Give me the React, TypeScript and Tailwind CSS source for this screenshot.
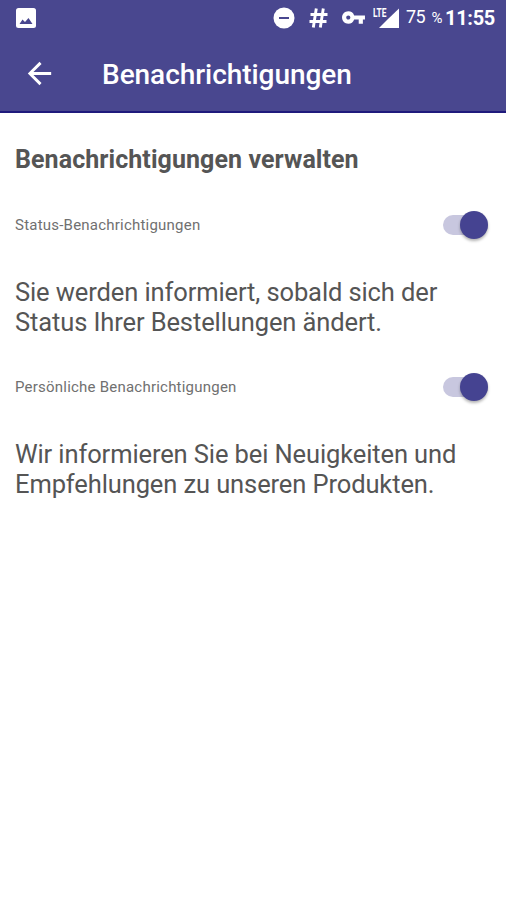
import { useState } from 'react';
import { MdArrowBack, MdVpnKey } from 'react-icons/md';
import clsx from 'clsx';

const SETTINGS = [
  {
    id: 'status',
    label: 'Status-Benachrichtigungen',
    lines: ['Sie werden informiert, sobald sich der', 'Status Ihrer Bestellungen ändert.'],
  },
  {
    id: 'personal',
    label: 'Persönliche Benachrichtigungen',
    lines: ['Wir informieren Sie bei Neuigkeiten und', 'Empfehlungen zu unseren Produkten.'],
  },
];

export default function App() {
  return (
    <div className="flex h-[900px] w-[506px] flex-col overflow-hidden bg-white font-['Roboto',sans-serif]">
      <header className="h-[113px] border-b-2 border-[#1f1a7c] bg-[#49478f] text-white">
        <StatusBar />
        <div className="flex h-[76px] items-center pl-[22px]">
          <button aria-label="Zurück">
            <MdArrowBack size={35} />
          </button>
          <h1 className="mt-1 ml-[45px] text-[28px] leading-8 font-medium tracking-[-0.05px] whitespace-nowrap">
            Benachrichtigungen
          </h1>
        </div>
      </header>

      <main className="px-[15px] pt-[31px] text-[#555]">
        <h2 className="text-[25px] leading-8 font-bold tracking-[0.07px] whitespace-nowrap">
          Benachrichtigungen verwalten
        </h2>
        <div className="mt-7 flex flex-col gap-[29px]">
          {SETTINGS.map((s) => (
            <section key={s.id}>
              <div className="flex h-[42px] items-center justify-between">
                <span className="mt-px text-[15px] tracking-[0.22px] text-[#707070]">{s.label}</span>
                <Toggle label={s.label} />
              </div>
              <p className="mt-[31px] text-[25.5px] leading-[30px] tracking-[-0.11px] whitespace-nowrap">
                {s.lines[0]}
                <br />
                {s.lines[1]}
              </p>
            </section>
          ))}
        </div>
      </main>
    </div>
  );
}

function StatusBar() {
  return (
    <div className="flex h-[35px] items-center justify-between pr-[11px] pl-4">
      {/* Screenshot notification */}
      <svg width="20" height="20" viewBox="0 0 20 20">
        <rect width="20" height="20" rx="2.5" fill="currentColor" />
        <path d="M3.5 16l3-4.5 2.5 2.5 3.5-4 4 6z" fill="#49478f" />
      </svg>
      <div className="flex items-center">
        {/* Do not disturb */}
        <svg width="22" height="22" viewBox="0 0 22 22">
          <circle cx="11" cy="11" r="10.5" fill="currentColor" />
          <path d="M6 11h10" stroke="#49478f" strokeWidth="2" />
        </svg>
        <svg className="ml-[14px]" width="19" height="20" viewBox="0 0 19 20" fill="none" stroke="currentColor" strokeWidth="2.9">
          <path d="M7.3 .5 4.3 19.5M14.3 .5l-3 19M1.5 6.5H18.5M.5 13.5H17.5" />
        </svg>
        <MdVpnKey className="ml-[13px]" size={25} />
        <SignalIcon />
        <span className="ml-[6px] flex w-[36px] items-baseline justify-between text-[18px] leading-5 tracking-[-0.6px]">
          <span>75</span>
          <span className="text-[15px]">%</span>
        </span>
        <span className="ml-[3px] text-[20px] leading-5 font-bold tracking-[-0.3px]">11:55</span>
      </div>
    </div>
  );
}

function SignalIcon() {
  return (
    <svg className="ml-[7px]" width="27" height="22" viewBox="0 0 27 22">
      <path d="M26 1.5v19.5H6l8.5-8.5z" fill="currentColor" />
      <text x="0" y="10" fontSize="12" fontWeight="700" textLength="13.5" lengthAdjust="spacingAndGlyphs" fill="currentColor">
        LTE
      </text>
    </svg>
  );
}

function Toggle({ label }: { label: string }) {
  const [on, setOn] = useState(true);

  return (
    <button
      role="switch"
      aria-checked={on}
      aria-label={label}
      onClick={() => setOn((v) => !v)}
      className={clsx(
        'mr-[3px] flex h-5 w-[45px] items-center rounded-full',
        on ? 'justify-end bg-[#c8c7df]' : 'justify-start bg-[#bdbdbd]'
      )}
    >
      <span
        className={clsx(
          'h-7 w-7 rounded-full shadow-[0_2px_3px_rgba(0,0,0,0.3)]',
          on ? 'bg-[#454391]' : 'bg-[#f5f5f5]'
        )}
      />
    </button>
  );
}
